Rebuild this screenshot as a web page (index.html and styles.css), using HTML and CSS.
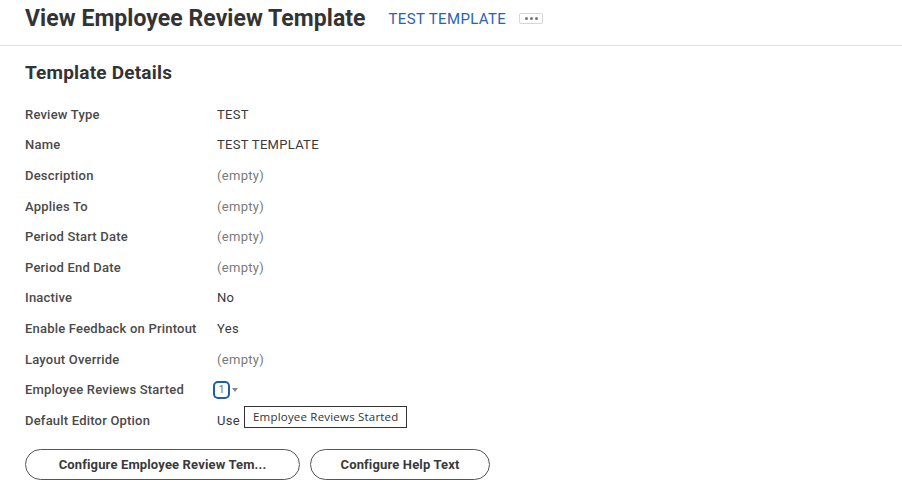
FILE: index.html
```html
<!DOCTYPE html>
<html>
<head>
<meta charset="utf-8">
<link rel="stylesheet" href="styles.css">
</head>
<body>
<header class="page-header">
  <h1 class="title">View Employee Review Template</h1>
  <a class="subject">TEST TEMPLATE</a>
  <span class="more"><i></i><i></i><i></i></span>
</header>
<main class="content">
  <h2 class="section-title">Template Details</h2>
  <div class="fields">
    <div class="row"><span class="label">Review Type</span><span class="value">TEST</span></div>
    <div class="row"><span class="label">Name</span><span class="value">TEST TEMPLATE</span></div>
    <div class="row"><span class="label">Description</span><span class="value empty">(empty)</span></div>
    <div class="row"><span class="label">Applies To</span><span class="value empty">(empty)</span></div>
    <div class="row"><span class="label">Period Start Date</span><span class="value empty">(empty)</span></div>
    <div class="row"><span class="label">Period End Date</span><span class="value empty">(empty)</span></div>
    <div class="row"><span class="label">Inactive</span><span class="value">No</span></div>
    <div class="row"><span class="label">Enable Feedback on Printout</span><span class="value">Yes</span></div>
    <div class="row"><span class="label">Layout Override</span><span class="value empty">(empty)</span></div>
    <div class="row"><span class="label">Employee Reviews Started</span><span class="value"><span class="count">1</span><span class="caret"></span></span></div>
    <div class="row"><span class="label">Default Editor Option</span><span class="value">Use<span class="tooltip">Employee Reviews Started</span></span></div>
  </div>
  <div class="actions">
    <button class="btn btn-wide">Configure Employee Review Tem...</button>
    <button class="btn">Configure Help Text</button>
  </div>
</main>
</body>
</html>
```

FILE: styles.css
```css
* { box-sizing: border-box; }
html, body { margin: 0; padding: 0; background: #fff; }
body { font-family: Roboto, "Noto Sans", sans-serif; color: #333; }

.page-header {
  height: 46px;
  display: flex;
  align-items: center;
  padding: 0 0 9px 25px;
  border-bottom: 1px solid #e2e2e2;
}
.title {
  margin: 0;
  font-size: 23px;
  font-weight: 700;
  color: #333;
  letter-spacing: 0.05px;
}
.subject {
  margin-left: 23px;
  font-size: 15px;
  color: #2a65a8;
  margin-top: 1px;
  letter-spacing: 0.35px;
}
.more {
  margin-left: 13px;
  width: 24px;
  height: 11px;
  border: 1px solid #d6d6d6;
  border-radius: 2px;
  display: flex;
  align-items: center;
  justify-content: center;
  gap: 2px;
}
.more i {
  width: 3px; height: 3px; border-radius: 50%; background: #777; display: block;
}

.content { padding: 0 25px; }
.section-title {
  margin: 17px 0 0;
  font-size: 19px;
  font-weight: 700;
  color: #333;
  line-height: 20px;
  letter-spacing: 0.2px;
}
.fields {
  margin-top: 16px;
  display: flex;
  flex-direction: column;
}
.row {
  display: grid;
  grid-template-columns: 192px 1fr;
  height: 30.6px;
  align-items: center;
  font-size: 13px;
  letter-spacing: 0.2px;
}
.label { font-weight: 500; color: #4a4a4a; }
.value { color: #3a3a3a; position: relative; display: flex; align-items: center; letter-spacing: 0.3px; }
.value.empty { color: #7a7a7a; }
.count {
  display: inline-flex;
  align-items: center;
  justify-content: center;
  width: 17px; height: 18px;
  margin-left: -4px;
  border: 2px solid #1c5fa8;
  border-radius: 5px;
  color: #777;
  font-size: 11px;
  letter-spacing: 0;
}
.caret {
  margin-left: 2px;
  width: 0; height: 0;
  border-left: 3px solid transparent;
  border-right: 3px solid transparent;
  border-top: 4px solid #888;
}
.tooltip {
  position: absolute;
  left: 27px;
  top: -7px;
  height: 22px;
  padding: 0 8px;
  border: 1px solid #333;
  background: #fff;
  font-family: "Open Sans", "DejaVu Sans", sans-serif;
  font-size: 11.5px;
  letter-spacing: 0.2px;
  color: #333;
  display: flex;
  align-items: center;
  white-space: nowrap;
}
.actions {
  margin-top: 13px;
  display: flex;
  gap: 10px;
}
.btn {
  height: 31px;
  border: 1px solid #555;
  border-radius: 16px;
  background: #fff;
  font-family: Roboto, sans-serif;
  font-size: 13px;
  font-weight: 700;
  letter-spacing: 0.15px;
  color: #3a3a3a;
  padding: 0;
  width: 180px;
}
.btn-wide { width: 275px; }
```
